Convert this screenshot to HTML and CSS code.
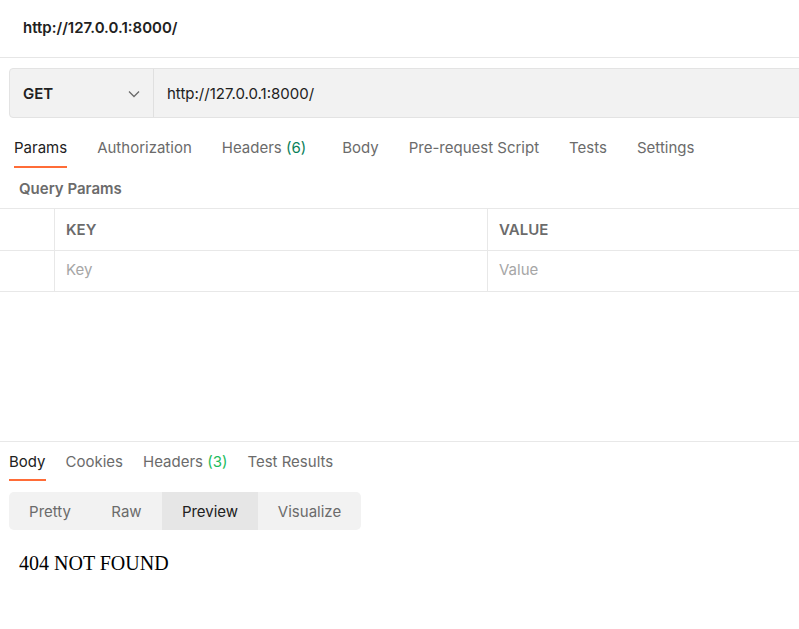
FILE: index.html
```html
<!DOCTYPE html>
<html>
<head>
<meta charset="utf-8">
<link rel="stylesheet" href="styles.css">
</head>
<body>
<div class="page">
  <header class="title-bar"><span class="title">http://127.0.0.1:8000/</span></header>

  <div class="request-bar">
    <div class="method">
      <span class="method-name">GET</span>
      <svg class="chevron" width="12" height="8" viewBox="0 0 12 8"><path d="M1 1.5 L6 6.5 L11 1.5" fill="none" stroke="#6b6b6b" stroke-width="1.3"/></svg>
    </div>
    <div class="url">http://127.0.0.1:8000/</div>
  </div>

  <nav class="tabs req-tabs">
    <span class="tab active">Params</span>
    <span class="tab">Authorization</span>
    <span class="tab">Headers <span class="count">(6)</span></span>
    <span class="tab wide">Body</span>
    <span class="tab">Pre-request Script</span>
    <span class="tab">Tests</span>
    <span class="tab">Settings</span>
  </nav>

  <div class="section-title">Query Params</div>

  <div class="params-table">
    <div class="row head">
      <div class="cell check"></div>
      <div class="cell key">KEY</div>
      <div class="cell value">VALUE</div>
    </div>
    <div class="row body-row">
      <div class="cell check"></div>
      <div class="cell key placeholder">Key</div>
      <div class="cell value placeholder">Value</div>
    </div>
  </div>

  <div class="spacer"></div>

  <section class="response">
    <nav class="tabs res-tabs">
      <span class="tab active">Body</span>
      <span class="tab">Cookies</span>
      <span class="tab">Headers <span class="count bright">(3)</span></span>
      <span class="tab">Test Results</span>
    </nav>
    <div class="segmented">
      <span class="seg">Pretty</span>
      <span class="seg">Raw</span>
      <span class="seg selected">Preview</span>
      <span class="seg">Visualize</span>
    </div>
    <div class="preview">404 NOT FOUND</div>
  </section>
</div>
</body>
</html>
```

FILE: styles.css
```css
* { box-sizing: border-box; }
html, body { margin: 0; padding: 0; background: #fff; }
body {
  width: 799px;
  height: 629px;
  overflow: hidden;
  font-family: Inter, "Noto Sans", sans-serif;
  font-size: 15px;
  color: #212121;
}
.page { display: flex; flex-direction: column; }

.title-bar {
  height: 58px;
  display: flex;
  align-items: center;
  padding: 0 0 2px 23px;
  border-bottom: 1px solid #e6e6e6;
}
.title { font-weight: 600; font-size: 15px; color: #212121; }

.request-bar {
  margin: 10px -20px 0 9px;
  height: 50px;
  display: flex;
  background: #f2f2f2;
  border: 1px solid #e3e3e3;
  border-radius: 4px;
}
.method {
  width: 144px;
  flex: none;
  display: flex;
  align-items: center;
  justify-content: space-between;
  padding: 1px 13px 0 13px;
  border-right: 1px solid #e0e0e0;
}
.method-name { font-weight: 600; font-size: 15px; color: #212121; }
.url {
  display: flex;
  align-items: center;
  padding: 1px 0 0 13px;
  font-size: 15px;
  color: #212121;
}

.tabs { display: flex; align-items: flex-start; }
.tab {
  position: relative;
  color: #6b6b6b;
  font-size: 15px;
  line-height: 18px;
  white-space: nowrap;
}
.tab.active { color: #212121; }
.tab.active::after {
  content: "";
  position: absolute;
  left: 0; right: 0;
  height: 2px;
  background: #ff6c37;
}
.count { color: #0a7f5a; }
.count.bright { color: #1dbb5c; }

.req-tabs {
  padding: 21px 0 0 14px;
  gap: 30px;
  height: 51px;
}
.req-tabs .tab.wide { margin-left: 6px; }
.req-tabs .tab.active::after { bottom: -11px; }

.section-title {
  padding: 10px 0 0 19px;
  height: 39px;
  font-weight: 600;
  font-size: 15px;
  color: #6b6b6b;
}

.params-table { border-top: 1px solid #e8e8e8; }
.row {
  display: flex;
  height: 41px;
  border-bottom: 1px solid #e8e8e8;
}
.row.head { height: 42px; }
.cell {
  display: flex;
  align-items: center;
  padding-left: 11px;
  font-size: 15px;
}
.body-row .cell { padding-bottom: 3px; }
.cell.check { width: 55px; padding: 0; border-right: 1px solid #e8e8e8; }
.cell.key { width: 433px; border-right: 1px solid #e8e8e8; }
.cell.value { flex: 1; }
.row.head .cell { font-weight: 600; color: #6b6b6b; }
.placeholder { color: #a6a6a6; }

.spacer { height: 149px; }

.response { border-top: 1px solid #e8e8e8; }
.res-tabs {
  padding: 11px 0 0 9px;
  gap: 20px;
  height: 50px;
}
.res-tabs .tab.active::after { bottom: -10px; }

.segmented {
  margin-left: 9px;
  width: 352px;
  height: 38px;
  display: flex;
  background: #f2f2f2;
  border-radius: 5px;
  overflow: hidden;
}
.seg {
  display: flex;
  align-items: center;
  justify-content: center;
  color: #6b6b6b;
  font-size: 15px;
}
.seg:nth-child(1) { width: 82px; }
.seg:nth-child(2) { width: 71px; }
.seg:nth-child(3) { width: 96px; }
.seg:nth-child(4) { width: 103px; }
.seg.selected { background: #e6e6e6; color: #212121; }

.preview {
  padding: 22px 0 0 19px;
  font-family: "Liberation Serif", "Times New Roman", serif;
  font-size: 20px;
  color: #000;
}
```
